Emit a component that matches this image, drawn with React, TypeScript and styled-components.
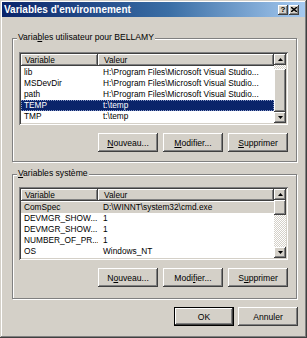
import React from "react";
import styled, { createGlobalStyle } from "styled-components";

const GlobalStyle = createGlobalStyle`
  html, body {
    margin: 0;
    padding: 0;
    background: #d4d0c8;
  }
  body {
    font-family: "Liberation Sans", Arial, sans-serif;
    font-size: 8.3px;
    color: #000;
  }
`;

// classic win2000 3d edges
const raised = `
  box-shadow: inset -1px -1px #404040, inset 1px 1px #ffffff,
    inset -2px -2px #808080, inset 2px 2px #d4d0c8;
`;

const Window = styled.div`
  width: 307px;
  height: 338px;
  box-sizing: border-box;
  padding: 2px;
  background: #d4d0c8;
  box-shadow: inset -1px -1px #404040, inset 1px 1px #d4d0c8,
    inset -2px -2px #808080, inset 2px 2px #ffffff;
  display: flex;
  flex-direction: column;
`;

const TitleBar = styled.div`
  height: 15px;
  display: flex;
  align-items: center;
  padding: 0 6px 0 2px;
  background: linear-gradient(90deg, #0a246a 0%, #3a6ea5 55%, #a6caf0 100%);
`;

const Title = styled.div`
  flex: 1;
  color: #fff;
  font-weight: bold;
  font-size: 10px;
  line-height: 15px;
  white-space: nowrap;
`;

const CaptionButtons = styled.div`
  display: flex;
  gap: 1px;
`;

const CaptionButton = styled.div`
  width: 10px;
  height: 10px;
  background: #d4d0c8;
  ${raised}
  display: flex;
  align-items: center;
  justify-content: center;
  font-weight: bold;
  font-size: 8px;
  line-height: 10px;
`;

const Content = styled.div`
  flex: 1;
  display: flex;
  flex-direction: column;
  padding: 21px 8px 0 10px;
`;

const Group = styled.div<{ $gap?: number }>`
  position: relative;
  margin-top: ${(p) => p.$gap ?? 0}px;
  border: 1px solid #808080;
  box-shadow: inset 1px 1px #ffffff, 1px 1px #ffffff;
  padding: ${(p) => (p.$gap ? "12px 8px 11px 6px" : "13px 8px 9px 6px")};
`;

const GroupLabel = styled.div`
  position: absolute;
  top: -7px;
  left: 4px;
  padding: 0 1px;
  line-height: 11px;
  font-size: 8.6px;
  background: #d4d0c8;
  white-space: nowrap;
`;

const ListView = styled.div`
  height: 73px;
  box-sizing: border-box;
  padding: 2px;
  background: #fff;
  box-shadow: inset 1px 1px #808080, inset -1px -1px #ffffff,
    inset 2px 2px #404040, inset -2px -2px #d4d0c8;
  display: flex;
`;

const ListBody = styled.div`
  flex: 1;
  display: flex;
  flex-direction: column;
  min-width: 0;
`;

const HeaderRow = styled.div`
  display: grid;
  grid-template-columns: 77px 1fr;
  height: 12px;
`;

const HeaderCell = styled.div<{ $pad: number }>`
  background: #d4d0c8;
  ${raised}
  padding-left: ${(p) => p.$pad}px;
  line-height: 12px;
  white-space: nowrap;
  overflow: hidden;
`;

const Rows = styled.div`
  padding-top: 1px;
  display: flex;
  flex-direction: column;
`;

const Row = styled.div<{ $sel?: "active" | "inactive" }>`
  display: grid;
  grid-template-columns: 77px 1fr;
  height: 11px;
  line-height: 11px;
  background: ${(p) =>
    p.$sel === "active" ? "#0a246a" : p.$sel === "inactive" ? "#d4d0c8" : "transparent"};
  color: ${(p) => (p.$sel === "active" ? "#fff" : "#000")};
  outline: ${(p) => (p.$sel === "active" ? "1px dotted #8a9ac8" : "none")};
  outline-offset: -1px;
`;

const Cell = styled.div<{ $pad: number }>`
  padding-left: ${(p) => p.$pad}px;
  white-space: nowrap;
  overflow: hidden;
`;

const ScrollBar = styled.div`
  width: 12px;
  display: flex;
  flex-direction: column;
`;

const ArrowButton = styled.div`
  height: 11px;
  flex: none;
  background: #d4d0c8;
  ${raised}
  display: flex;
  align-items: center;
  justify-content: center;
`;

const Track = styled.div`
  flex: 1;
  display: flex;
  flex-direction: column;
  background: repeating-conic-gradient(#d4d0c8 0 25%, #ffffff 0 50%) 0 0 / 2px 2px;
`;

const Thumb = styled.div`
  background: #d4d0c8;
  ${raised}
`;

const ButtonRow = styled.div<{ $gap: number; $top: number }>`
  display: flex;
  justify-content: flex-end;
  gap: ${(p) => p.$gap}px;
  margin-top: ${(p) => p.$top}px;
`;

const Button = styled.button<{ $default?: boolean }>`
  width: 60px;
  height: 19px;
  padding: 0;
  border: none;
  background: #d4d0c8;
  font-family: "Liberation Sans", Arial, sans-serif;
  font-size: 8.6px;
  color: #000;
  ${(p) =>
    p.$default
      ? `box-shadow: inset 0 0 0 1px #000000, inset -2px -2px #404040, inset 2px 2px #ffffff, inset -3px -3px #808080;`
      : raised}
  u {
    text-decoration: underline;
  }
`;

const Arrow = ({ up }: { up?: boolean }) => (
  <svg width="5" height="3" viewBox="0 0 5 3">
    <polygon points={up ? "2.5,0 5,3 0,3" : "0,0 5,0 2.5,3"} fill="#000" />
  </svg>
);

type Item = { name: string; value: string; sel?: "active" | "inactive" };

const userVars: Item[] = [
  { name: "lib", value: "H:\\Program Files\\Microsoft Visual Studio..." },
  { name: "MSDevDir", value: "H:\\Program Files\\Microsoft Visual Studio..." },
  { name: "path", value: "H:\\Program Files\\Microsoft Visual Studio..." },
  { name: "TEMP", value: "t:\\temp", sel: "active" },
  { name: "TMP", value: "t:\\temp" },
];

const systemVars: Item[] = [
  { name: "ComSpec", value: "D:\\WINNT\\system32\\cmd.exe", sel: "inactive" },
  { name: "DEVMGR_SHOW...", value: "1" },
  { name: "DEVMGR_SHOW...", value: "1" },
  { name: "NUMBER_OF_PR...", value: "1" },
  { name: "OS", value: "Windows_NT" },
];

const VarList = ({ items, thumbTop, thumbSize }: { items: Item[]; thumbTop: number; thumbSize: number }) => (
  <ListView>
    <ListBody>
      <HeaderRow>
        <HeaderCell $pad={4}>Variable</HeaderCell>
        <HeaderCell $pad={6}>Valeur</HeaderCell>
      </HeaderRow>
      <Rows>
        {items.map((it, i) => (
          <Row key={i} $sel={it.sel}>
            <Cell $pad={3}>{it.name}</Cell>
            <Cell $pad={5}>{it.value}</Cell>
          </Row>
        ))}
      </Rows>
    </ListBody>
    <ScrollBar>
      <ArrowButton>
        <Arrow up />
      </ArrowButton>
      <Track>
        <Thumb style={{ marginTop: thumbTop, height: thumbSize }} />
      </Track>
      <ArrowButton>
        <Arrow />
      </ArrowButton>
    </ScrollBar>
  </ListView>
);

const App: React.FC = () => {
  return (
    <>
      <GlobalStyle />
      <Window>
        <TitleBar>
          <Title>Variables d'environnement</Title>
          <CaptionButtons>
            <CaptionButton>?</CaptionButton>
            <CaptionButton>
              <svg width="6" height="5" viewBox="0 0 6 5">
                <path d="M0 0 L6 5 M6 0 L0 5" stroke="#000" strokeWidth="1.4" />
              </svg>
            </CaptionButton>
          </CaptionButtons>
        </TitleBar>

        <Content>
          <Group>
            <GroupLabel>
              Varia<u>b</u>les utilisateur pour BELLAMY
            </GroupLabel>
            <VarList items={userVars} thumbTop={4} thumbSize={43} />
            <ButtonRow $gap={5} $top={8}>
              <Button>
                <u>N</u>ouveau...
              </Button>
              <Button>
                <u>M</u>odifier...
              </Button>
              <Button>
                <u>S</u>upprimer
              </Button>
            </ButtonRow>
          </Group>

          <Group $gap={12}>
            <GroupLabel>
              <u>V</u>ariables système
            </GroupLabel>
            <VarList items={systemVars} thumbTop={0} thumbSize={15} />
            <ButtonRow $gap={5} $top={8}>
              <Button>
                N<u>o</u>uveau...
              </Button>
              <Button>
                Modi<u>f</u>ier...
              </Button>
              <Button>
                S<u>u</u>pprimer
              </Button>
            </ButtonRow>
          </Group>

          <ButtonRow $gap={4} $top={8} style={{ marginRight: -1 }}>
            <Button $default>OK</Button>
            <Button>Annuler</Button>
          </ButtonRow>
        </Content>
      </Window>
    </>
  );
};

export default App;
